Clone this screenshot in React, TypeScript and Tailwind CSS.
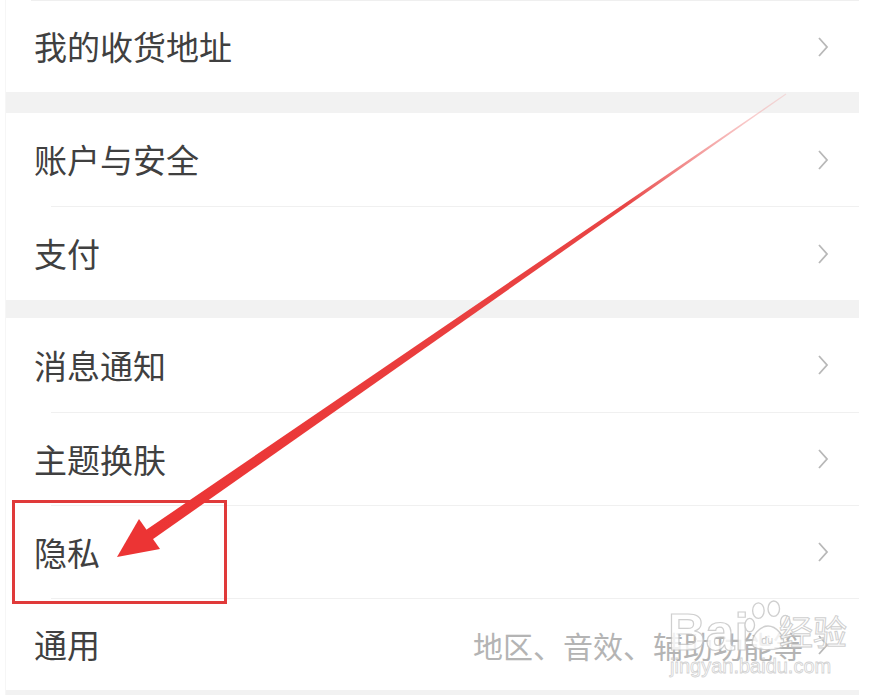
import React from 'react';

const Chevron = () => (
  <svg width="12" height="22" viewBox="0 0 12 22" className="shrink-0">
    <polyline points="2,2 10,11 2,20" fill="none" stroke="#b8b8b8" strokeWidth="1.8" />
  </svg>
);

function Row({ label, hint, h }: { label: string; hint?: string; h: string }) {
  return (
    <div className={`flex items-center justify-between pl-[28px] pr-[30px] ${h}`}>
      <span className="text-[33px] leading-none text-[#404040]">{label}</span>
      <div className="flex items-center gap-[14px]">
        {hint && <span className="text-[30px] leading-none text-[#b4b4b4]">{hint}</span>}
        <Chevron />
      </div>
    </div>
  );
}

const Sep = () => <div className="h-px ml-[45px] bg-[#f0f0f0]" />;
const Band = ({ h }: { h: string }) => <div className={`${h} bg-[#f2f2f2]`} />;

export default function App() {
  return (
    <div className="relative w-[873px] h-[695px] bg-white overflow-hidden font-['Noto_Sans_CJK_SC','Noto_Sans',sans-serif]">
      <div className="ml-[5px] w-[854px] border-l border-[#f6f6f6]">
        <div className="h-px ml-[25px] bg-[#efefef]" />
        <Row label="我的收货地址" h="h-[91px]" />
        <Band h="h-[21px]" />
        <Row label="账户与安全" h="h-[93px]" />
        <Sep />
        <Row label="支付" h="h-[93px]" />
        <Band h="h-[18px]" />
        <Row label="消息通知" h="h-[94px]" />
        <Sep />
        <Row label="主题换肤" h="h-[92px]" />
        <Sep />
        <Row label="隐私" h="h-[92px]" />
        <Sep />
        <Row label="通用" hint="地区、音效、辅助功能等" h="h-[91px]" />
        <Band h="h-[10px]" />
      </div>

      {/* watermark */}
      <div className="absolute left-[668px] top-[596px] flex flex-col items-start opacity-80">
        <div className="flex items-end">
          <span className="text-[52px] leading-none font-bold text-white font-['Liberation_Sans',sans-serif] [-webkit-text-stroke:1.2px_#c4c4c4]">
            Bai
          </span>
          <svg width="50" height="60" viewBox="0 0 52 56" className="-ml-[6px] mb-[2px]">
            <g fill="white" stroke="#c4c4c4" strokeWidth="1.4">
              <ellipse cx="16" cy="12" rx="6" ry="8" />
              <ellipse cx="32" cy="10" rx="6" ry="8" />
              <ellipse cx="7" cy="27" rx="5" ry="7" />
              <ellipse cx="44" cy="24" rx="5" ry="7" />
              <path d="M10 48 C8 38 18 28 26 28 C34 28 44 38 42 48 C40 54 12 54 10 48 Z" />
            </g>
            <text x="19" y="47" fontSize="11" fill="#c4c4c4" fontFamily="Liberation Sans, sans-serif">du</text>
          </svg>
          <span className="text-[34px] leading-none text-white [-webkit-text-stroke:1px_#c4c4c4] -ml-[14px] mb-[10px]">
            经验
          </span>
        </div>
        <span className="text-[20px] leading-none text-white font-['Liberation_Sans',sans-serif] [-webkit-text-stroke:0.8px_#c8c8c8] ml-[2px] -mt-[2px]">
          jingyan.baidu.com
        </span>
      </div>

      {/* highlight box */}
      <div className="absolute left-[12px] top-[500px] w-[215px] h-[104px] border-[3px] border-[#e03a3a]" />

      {/* arrow */}
      <svg className="absolute inset-0" width="873" height="695" viewBox="0 0 873 695">
        <defs>
          <linearGradient id="shaft" x1="786" y1="94" x2="147" y2="536" gradientUnits="userSpaceOnUse">
            <stop offset="0" stopColor="#f4a0a0" stopOpacity="0.3" />
            <stop offset="0.25" stopColor="#e84545" />
            <stop offset="1" stopColor="#ec3434" />
          </linearGradient>
        </defs>
        <polygon points="786.3,94.4 785.7,93.6 144.5,531 151,540.5" fill="url(#shaft)" />
        <polygon points="117,557 139,519 160,549" fill="#ec3434" />
      </svg>
    </div>
  );
}
